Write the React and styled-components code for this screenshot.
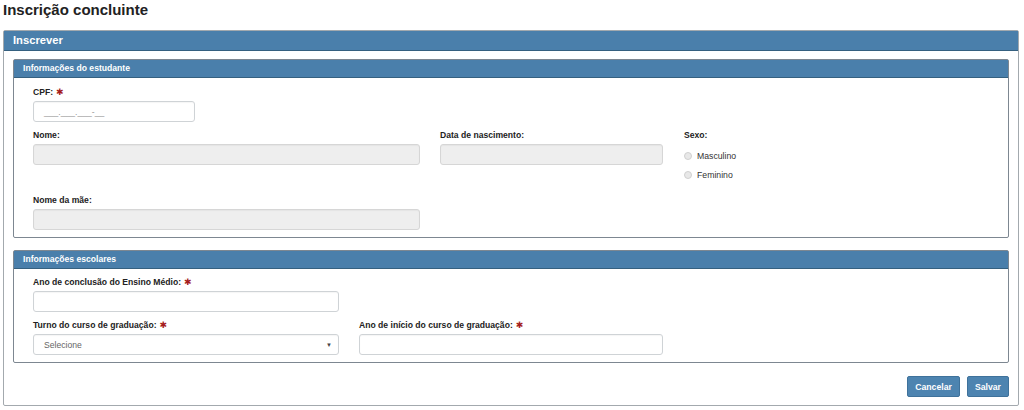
import React from 'react'
import styled, { createGlobalStyle } from 'styled-components'

const GlobalStyle = createGlobalStyle`
  body {
    margin: 0;
    background: #fff;
    font-family: 'Liberation Sans', Arial, sans-serif;
    color: #333;
  }
`

const Page = styled.div`
  padding: 1px 5px 0 3px;
`

const Title = styled.h1`
  margin: 0;
  font-size: 15px;
  line-height: 18px;
  font-weight: 700;
  color: #222;
`

const Panel = styled.div`
  margin-top: ${(p) => p.$top || 0}px;
  border: 1px solid ${(p) => (p.$inner ? '#7d8791' : '#a3a9ae')};
  border-radius: 2px;
  background: #fff;
`

const Heading = styled.div`
  height: ${(p) => (p.$inner ? 17 : 19)}px;
  line-height: ${(p) => (p.$inner ? 17 : 19)}px;
  padding-left: 9px;
  background: #4a7fab;
  border-bottom: 1px solid #35607f;
  color: #fff;
  font-weight: 700;
  font-size: ${(p) => (p.$inner ? '8.6px' : '11.2px')};
`

const OuterBody = styled.div`
  padding: 8px 9px 8px 9px;
`

const InnerBody = styled.div`
  padding: ${(p) => p.$top || 7}px 19px 0 19px;
`

const Row = styled.div`
  display: flex;
  gap: 20px;
  margin-bottom: 7px;
`

const Field = styled.div`
  display: flex;
  flex-direction: column;
  width: ${(p) => p.$w}px;
  margin-left: ${(p) => p.$shift || 0}px;
`

const Label = styled.label`
  font-size: 8.6px;
  font-weight: 700;
  line-height: 12px;
  margin-bottom: 3px;
  color: #222;
`

const Req = styled.span`
  color: #a51d1d;
  font-family: 'DejaVu Sans', sans-serif;
  font-size: 9px;
  font-weight: 700;
  margin-left: 3px;
`

const Input = styled.div`
  box-sizing: border-box;
  height: 21px;
  border: 1px solid ${(p) => (p.$disabled ? '#d6d6d6' : '#cfd3d6')};
  border-radius: 3px;
  background: ${(p) => (p.$disabled ? '#eeeeee' : '#fff')};
  box-shadow: inset 0 1px 1px rgba(0, 0, 0, 0.04);
  display: flex;
  align-items: center;
  padding: 0 10px;
  font-size: 8.6px;
  color: #999;
`

const Select = styled(Input)`
  justify-content: space-between;
  color: #666;
  padding-right: 6px;
`

const Caret = styled.span`
  font-size: 6px;
  color: #444;
`

const RadioGroup = styled.div`
  display: flex;
  flex-direction: column;
  padding-top: 2px;
  margin-bottom: 3px;
`

const RadioLine = styled.div`
  display: flex;
  align-items: center;
  height: 19px;
  font-size: 8.7px;
  color: #333;
`

const RadioDot = styled.span`
  box-sizing: border-box;
  width: 8px;
  height: 8px;
  border-radius: 50%;
  border: 1px solid #d0d0d0;
  background: #e8e8e8;
  margin-right: 5px;
`

const Actions = styled.div`
  display: flex;
  justify-content: flex-end;
  gap: 7px;
  margin-top: 13px;
`

const Button = styled.button`
  height: 21px;
  padding: 0 7px;
  border: 1px solid #3f729b;
  border-radius: 2px;
  background: #4d84b0;
  color: #fff;
  font-family: 'Liberation Sans', Arial, sans-serif;
  font-weight: 700;
  font-size: 8.7px;
  cursor: pointer;
`

const Required = () => <Req>✱</Req>

const App = () => (
  <Page>
    <GlobalStyle />
    <Title>Inscrição concluinte</Title>
    <Panel $top={11}>
      <Heading>Inscrever</Heading>
      <OuterBody>
        <Panel $inner>
          <Heading $inner>Informações do estudante</Heading>
          <InnerBody $top={8}>
            <Row>
              <Field $w={162}>
                <Label>CPF:<Required /></Label>
                <Input>___.___.___-__</Input>
              </Field>
            </Row>
            <Row>
              <Field $w={387}>
                <Label>Nome:</Label>
                <Input $disabled />
              </Field>
              <Field $w={223}>
                <Label>Data de nascimento:</Label>
                <Input $disabled />
              </Field>
              <Field $w={120} $shift={1}>
                <Label>Sexo:</Label>
                <RadioGroup>
                  <RadioLine><RadioDot />Masculino</RadioLine>
                  <RadioLine><RadioDot />Feminino</RadioLine>
                </RadioGroup>
              </Field>
            </Row>
            <Row>
              <Field $w={387}>
                <Label>Nome da mãe:</Label>
                <Input $disabled />
              </Field>
            </Row>
          </InnerBody>
        </Panel>
        <Panel $inner $top={12}>
          <Heading $inner>Informações escolares</Heading>
          <InnerBody $top={7}>
            <Row>
              <Field $w={306}>
                <Label>Ano de conclusão do Ensino Médio:<Required /></Label>
                <Input />
              </Field>
            </Row>
            <Row>
              <Field $w={306}>
                <Label>Turno do curso de graduação:<Required /></Label>
                <Select>
                  Selecione
                  <Caret>▼</Caret>
                </Select>
              </Field>
              <Field $w={304}>
                <Label>Ano de início do curso de graduação:<Required /></Label>
                <Input />
              </Field>
            </Row>
          </InnerBody>
        </Panel>
        <Actions>
          <Button>Cancelar</Button>
          <Button>Salvar</Button>
        </Actions>
      </OuterBody>
    </Panel>
  </Page>
)

export default App
